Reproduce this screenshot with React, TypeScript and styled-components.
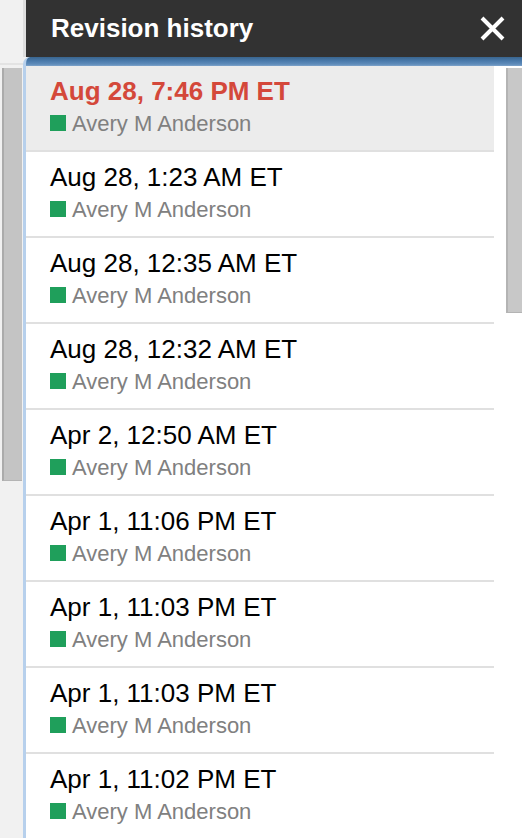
import React from 'react'
import styled, { createGlobalStyle } from 'styled-components'

interface Revision {
  id: number
  date: string
  author: string
}

const revisions: Revision[] = [
  { id: 1, date: 'Aug 28, 7:46 PM ET', author: 'Avery M Anderson' },
  { id: 2, date: 'Aug 28, 1:23 AM ET', author: 'Avery M Anderson' },
  { id: 3, date: 'Aug 28, 12:35 AM ET', author: 'Avery M Anderson' },
  { id: 4, date: 'Aug 28, 12:32 AM ET', author: 'Avery M Anderson' },
  { id: 5, date: 'Apr 2, 12:50 AM ET', author: 'Avery M Anderson' },
  { id: 6, date: 'Apr 1, 11:06 PM ET', author: 'Avery M Anderson' },
  { id: 7, date: 'Apr 1, 11:03 PM ET', author: 'Avery M Anderson' },
  { id: 8, date: 'Apr 1, 11:03 PM ET', author: 'Avery M Anderson' },
  { id: 9, date: 'Apr 1, 11:02 PM ET', author: 'Avery M Anderson' },
]

const App: React.FC = () => {
  const selectedId = 1

  return (
    <>
      <GlobalStyle />
      <Page>
        <Gutter>
          <GutterTop />
          <GutterThumb />
        </Gutter>

        <Panel>
          <Header>
            <Title>Revision history</Title>
            <CloseButton aria-label="Close">
              <svg width="25" height="25" viewBox="0 0 25 25">
                <path d="M2 2 L23 23 M23 2 L2 23" stroke="#fff" strokeWidth="4" fill="none" />
              </svg>
            </CloseButton>
          </Header>

          <FocusBar />

          <Body>
            <RevisionList>
              {revisions.map(revision => (
                <RevisionItem key={revision.id} selected={revision.id === selectedId}>
                  <RevisionDate selected={revision.id === selectedId}>{revision.date}</RevisionDate>
                  <Author>
                    <AuthorSwatch />
                    {revision.author}
                  </Author>
                </RevisionItem>
              ))}
            </RevisionList>

            <ScrollTrack>
              <ScrollThumb />
            </ScrollTrack>
          </Body>
        </Panel>
      </Page>
    </>
  )
}

export default App

// ========================================
// STYLED COMPONENTS
// ========================================

const GlobalStyle = createGlobalStyle`
  html, body {
    margin: 0;
    padding: 0;
    overflow: hidden;
    background: #f1f1f1;
    font-family: "Liberation Sans", Arial, sans-serif;
  }
`

const Page = styled.div`
  display: flex;
  width: 522px;
  height: 838px;
  overflow: hidden;
`

const Gutter = styled.div`
  width: 23px;
  flex-shrink: 0;
  display: flex;
  flex-direction: column;
  background: #f1f1f1;
`

const GutterTop = styled.div`
  height: 63px;
  border-bottom: 2px solid #e3e3e3;
`

const GutterThumb = styled.div`
  margin: 3px 0 0 2px;
  width: 18px;
  height: 412px;
  background: #c4c4c4;
  border-left: 2px solid #ababab;
  border-bottom: 1px solid #b4b4b4;
`

const Panel = styled.div`
  flex: 1;
  display: flex;
  flex-direction: column;
  min-width: 0;
`

const Header = styled.div`
  height: 57px;
  flex-shrink: 0;
  display: flex;
  align-items: center;
  justify-content: space-between;
  background: #323232;
  border-left: 3px solid #dedede;
  padding: 0 17px 0 25px;
`

const Title = styled.h2`
  margin: 0;
  font-size: 26px;
  line-height: 57px;
  font-weight: 700;
  color: #ffffff;
`

const CloseButton = styled.button`
  background: transparent;
  border: none;
  padding: 0;
  width: 25px;
  height: 25px;
  display: flex;
  cursor: pointer;
`

const FocusBar = styled.div`
  height: 9px;
  flex-shrink: 0;
  border-left: 3px solid #b7d0ec;
  border-top-left-radius: 7px;
  background: linear-gradient(#39658f, #4b7bac 45%, #5f8cba 80%, #7ea3cb);
`

const Body = styled.div`
  flex: 1;
  display: flex;
  background: #ffffff;
  border-left: 3px solid #b7d0ec;
  overflow: hidden;
`

const RevisionList = styled.div`
  width: 468px;
  flex-shrink: 0;
  display: flex;
  flex-direction: column;
`

const RevisionItem = styled.div<{ selected: boolean }>`
  flex-shrink: 0;
  padding: 9px 0 12px 24px;
  border-bottom: 2px solid #e0e0e0;
  background: ${props => (props.selected ? '#ececec' : '#ffffff')};
`

const RevisionDate = styled.div<{ selected: boolean }>`
  font-size: 26px;
  line-height: 32px;
  font-weight: ${props => (props.selected ? 700 : 400)};
  color: ${props => (props.selected ? '#d4483a' : '#000000')};
  white-space: nowrap;
`

const Author = styled.div`
  margin-top: 3px;
  font-size: 22px;
  line-height: 28px;
  color: #808080;
  white-space: nowrap;
`

const AuthorSwatch = styled.span`
  display: inline-block;
  width: 16px;
  height: 16px;
  margin-right: 6px;
  background: #1f9f5b;
`

const ScrollTrack = styled.div`
  flex: 1;
  display: flex;
  justify-content: flex-end;
  align-items: flex-start;
`

const ScrollThumb = styled.div`
  margin-top: 2px;
  width: 14px;
  height: 244px;
  background: #c8c8c8;
  border-left: 2px solid #b4b4b4;
  border-bottom: 1px solid #b4b4b4;
`
